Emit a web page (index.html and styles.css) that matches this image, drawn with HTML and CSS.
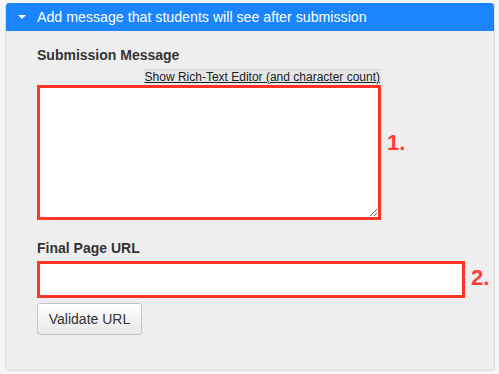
FILE: index.html
```html
<!DOCTYPE html>
<html lang="en">
<head>
    <meta charset="UTF-8">
    <title>Submission Message</title>
    <link rel="stylesheet" href="styles.css">
</head>
<body>
    <!-- panel -->
    <div class="panel">
        <div class="panel-head">
            <span class="caret"></span>
            Add message that students will see after submission
        </div>
        <div class="panel-body">
            <h4 class="label">Submission Message</h4>
            <div class="field-row">
                <div class="field-col">
                    <a class="rich-link" href="#">Show Rich-Text Editor (and character count)</a>
                    <textarea class="msg-box"></textarea>
                </div>
                <span class="step">1.</span>
            </div>

            <h4 class="label url-label">Final Page URL</h4>
            <div class="field-row">
                <input class="url-box" type="text">
                <span class="step">2.</span>
            </div>
            <button class="btn">Validate URL</button>
        </div>
    </div>
</body>
</html>
```

FILE: styles.css
```css
* { box-sizing: border-box; }
body { margin: 0; font-family: "Liberation Sans", Arial, sans-serif; background: #f6f6f6; color: #333; }

/* panel */
.panel {
    width: 490px;
    height: 368px;
    margin: 3px 0 0 5px;
    background: #eee;
    border: 1px solid #ddd;
    border-top: none;
    border-radius: 4px;
    overflow: hidden;
}
.panel-head {
    height: 28px;
    background: #1a85ff;
    color: white;
    font-size: 14.2px;
    line-height: 28px;
    padding-left: 12px;
    display: flex;
    align-items: center;
}
.caret {
    width: 0;
    height: 0;
    border-left: 4px solid transparent;
    border-right: 4px solid transparent;
    border-top: 4px solid white;
    margin-right: 11px;
}

.panel-body { padding: 14px 0 0 31px; }
.label {
    margin: 0;
    font-size: 14px;
    line-height: 20px;
    font-weight: bold;
}
.url-label { margin-top: 18px; }

.field-row {
    display: flex;
    align-items: center;
}
.field-col { width: 344px; }
.rich-link {
    display: table;
    margin: 4px 0 1px auto;
    font-size: 12px;
    line-height: 14px;
    color: #222;
    background: #e6e6e6;
    border-top: 1px solid #d8d8d8;
    padding: 0 1px;
}
.msg-box {
    display: block;
    width: 344px;
    height: 135px;
    border: 3px solid #ff3326;
    background: white;
    resize: vertical;
}
.url-box {
    width: 428px;
    height: 37px;
    margin-top: 3px;
    border: 3px solid #ff3326;
    background: white;
}
.step {
    margin-left: 6px;
    color: #ff3b3b;
    font-size: 22px;
    font-weight: bold;
}

.btn {
    margin-top: 5px;
    width: 105px;
    height: 32px;
    font-family: inherit;
    font-size: 14px;
    color: #333;
    background: linear-gradient(#fff, #e8e8e8);
    border: 1px solid #c4c4c4;
    border-radius: 3px;
}
```
